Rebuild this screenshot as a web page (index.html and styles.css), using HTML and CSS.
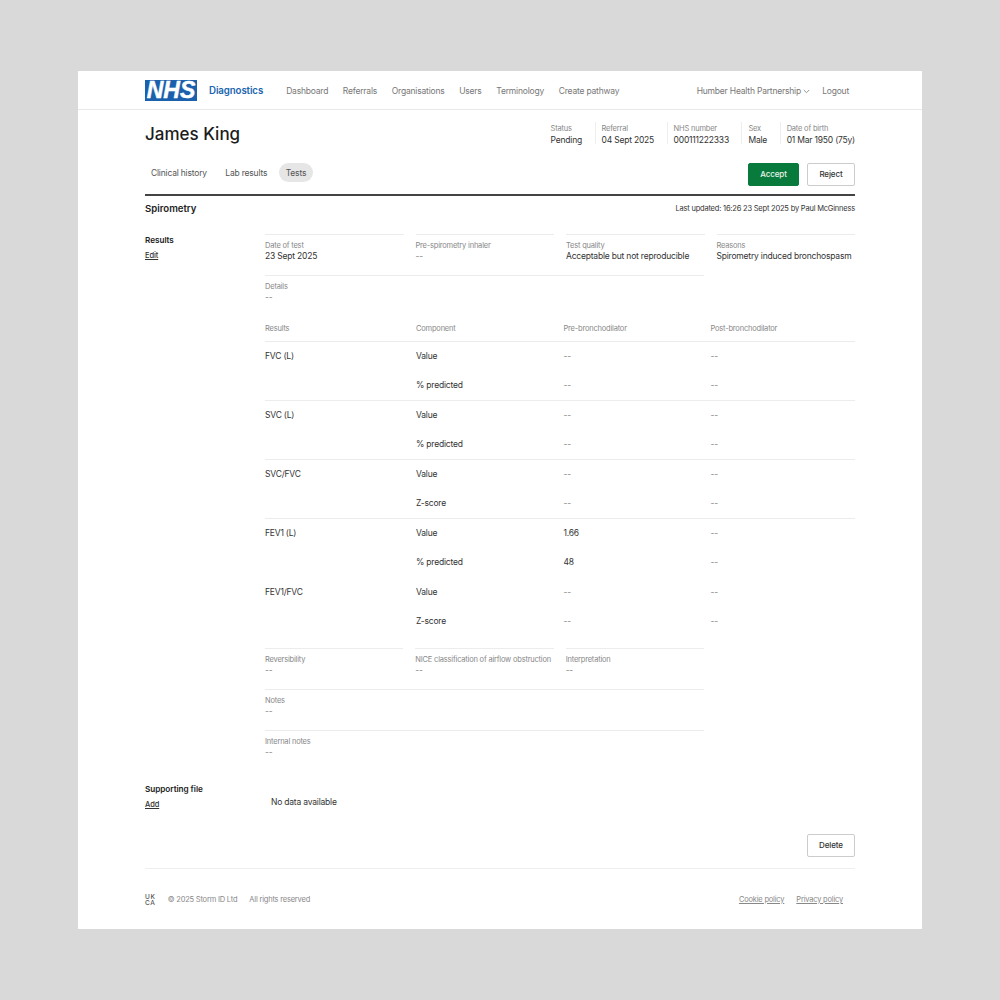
FILE: index.html
```html
<!DOCTYPE html>
<html lang="en">
<head>
<meta charset="utf-8">
<title>James King - Tests</title>
<link rel="stylesheet" href="styles.css">
</head>
<body>
<div class="panel">
  <header class="topbar">
    <div class="nhs">NHS</div>
    <div class="brand">Diagnostics</div>
    <nav class="nav">
      <a>Dashboard</a><a>Referrals</a><a>Organisations</a><a>Users</a><a>Terminology</a><a>Create pathway</a>
    </nav>
    <div class="account">
      <span class="org">Humber Health Partnership
        <svg class="chev" width="7" height="5" viewBox="0 0 7 5"><path d="M.8 1l2.7 2.7L6.2 1" fill="none" stroke="#777" stroke-width=".8"/></svg>
      </span>
      <a>Logout</a>
    </div>
  </header>
  <main class="content">
    <section class="patient">
      <h1>James King</h1>
      <dl class="facts">
        <div class="fact"><dt>Status</dt><dd>Pending</dd></div>
        <div class="fact"><dt>Referral</dt><dd>04 Sept 2025</dd></div>
        <div class="fact"><dt>NHS number</dt><dd>000111222333</dd></div>
        <div class="fact"><dt>Sex</dt><dd>Male</dd></div>
        <div class="fact"><dt>Date of birth</dt><dd>01 Mar 1950 (75y)</dd></div>
      </dl>
    </section>
    <section class="tabsrow">
      <div class="tabs">
        <a class="tab">Clinical history</a><a class="tab">Lab results</a><a class="tab active">Tests</a>
      </div>
      <div class="actions">
        <button class="btn primary">Accept</button>
        <button class="btn">Reject</button>
      </div>
    </section>
    <section class="titlebar">
      <h2>Spirometry</h2>
      <p class="updated">Last updated: 16:26 23 Sept 2025 by Paul McGinness</p>
    </section>
    <section class="results">
      <div class="side"><h3>Results</h3><a>Edit</a></div>
      <div class="body">
        <div class="fields four">
          <div class="field"><span>Date of test</span><b>23 Sept 2025</b></div>
          <div class="field"><span>Pre-spirometry inhaler</span><b class="nil">--</b></div>
          <div class="field"><span>Test quality</span><b>Acceptable but not reproducible</b></div>
          <div class="field"><span>Reasons</span><b>Spirometry induced bronchospasm</b></div>
        </div>
        <div class="field wide"><span>Details</span><b class="nil">--</b></div>
        <div class="table">
          <div class="thead"><span>Results</span><span>Component</span><span>Pre-bronchodilator</span><span>Post-bronchodilator</span></div>
          <div class="group">
            <div class="row"><span>FVC (L)</span><span>Value</span><span class="nil">--</span><span class="nil">--</span></div>
            <div class="row"><span></span><span>% predicted</span><span class="nil">--</span><span class="nil">--</span></div>
          </div>
          <div class="group">
            <div class="row"><span>SVC (L)</span><span>Value</span><span class="nil">--</span><span class="nil">--</span></div>
            <div class="row"><span></span><span>% predicted</span><span class="nil">--</span><span class="nil">--</span></div>
          </div>
          <div class="group">
            <div class="row"><span>SVC/FVC</span><span>Value</span><span class="nil">--</span><span class="nil">--</span></div>
            <div class="row"><span></span><span>Z-score</span><span class="nil">--</span><span class="nil">--</span></div>
          </div>
          <div class="group">
            <div class="row"><span>FEV1 (L)</span><span>Value</span><span>1.66</span><span class="nil">--</span></div>
            <div class="row"><span></span><span>% predicted</span><span>48</span><span class="nil">--</span></div>
          </div>
          <div class="group nolines">
            <div class="row"><span>FEV1/FVC</span><span>Value</span><span class="nil">--</span><span class="nil">--</span></div>
            <div class="row"><span></span><span>Z-score</span><span class="nil">--</span><span class="nil">--</span></div>
          </div>
        </div>
        <div class="lower">
          <div class="fields three">
            <div class="field"><span>Reversibility</span><b class="nil">--</b></div>
            <div class="field"><span>NICE classification of airflow obstruction</span><b class="nil">--</b></div>
            <div class="field"><span>Interpretation</span><b class="nil">--</b></div>
          </div>
          <div class="field wide"><span>Notes</span><b class="nil">--</b></div>
          <div class="field wide"><span>Internal notes</span><b class="nil">--</b></div>
        </div>
      </div>
    </section>
    <section class="files">
      <div class="side"><h3>Supporting file</h3><a>Add</a></div>
      <p class="empty">No data available</p>
    </section>
    <div class="deleterow"><button class="btn">Delete</button></div>
    <footer class="footer">
      <div class="ukca">UK<br>CA</div>
      <span class="copy">© 2025 Storm ID Ltd</span>
      <span class="rights">All rights reserved</span>
      <div class="legal"><a>Cookie policy</a><a>Privacy policy</a></div>
    </footer>
  </main>
</div>
</body>
</html>
```
FILE: styles.css
```css
* { box-sizing: border-box; }
html, body { margin: 0; }
body {
  height: 1000px;
  background: #d9d9d9;
  padding: 71px 78px;
  font-family: Inter, "Liberation Sans", sans-serif;
  font-size: 8.5px;
  letter-spacing: -.2px;
  line-height: 12px;
  color: #333;
}
.panel { background: #fff; height: 858px; }
.topbar {
  height: 39px;
  padding: 0 73px 0 67px;
  border-bottom: 1px solid #e9e9e9;
  display: flex;
  align-items: center;
}
.nhs {
  width: 52px; height: 21px;
  background: #1a60ac;
  color: #fff;
  font: italic bold 23px/21px "Liberation Sans", sans-serif;
  -webkit-text-stroke: .5px #fff;
  text-align: center;
  letter-spacing: 0;
}
.brand { margin-left: 12px; color: #1a64ae; font-weight: 600; font-size: 9.7px; letter-spacing: -.1px; padding-top: 1px; }
.nav { margin-left: 23px; display: flex; gap: 14.7px; color: #777; padding-top: 1px; }
.account { margin-left: auto; display: flex; gap: 12px; color: #777; padding-top: 1px; }
.chev { margin-left: 0; }
.content { padding: 0 67px; }
.patient { height: 52px; display: flex; justify-content: space-between; align-items: flex-start; }
h1 { margin: 14px 0 0; font-size: 17px; line-height: 20px; font-weight: 500; letter-spacing: 0; color: #1c1c1c; }
.facts { margin: 12px 0 0; display: flex; }
.fact { padding: 0 0 0 6px; margin-left: 12.5px; border-left: 1px solid #eee; height: 22px; }
.fact:first-child { border-left: 0; padding-left: 0; margin-left: 0; }
dt { font-size: 7.5px; line-height: 11px; padding-top: 1px; height: 11px; color: #888; }
dd { margin: 0; font-size: 8.5px; line-height: 12px; padding-top: 1px; color: #333; }
.tabsrow { display: flex; justify-content: space-between; align-items: flex-start; border-bottom: 2px solid #444; height: 34px; padding-top: 1px; }
.tabs { display: flex; color: #555; margin-left: -.5px; }
.tab { padding: 0 6.5px; height: 19px; line-height: 20px; border-radius: 10px; margin-right: 5.5px; }
.tab.active { background: #e6e6e6; }
.actions { display: flex; gap: 8px; }
.btn {
  width: 48px; height: 23px;
  border: 1px solid #ccc;
  border-radius: 2px;
  background: #fff;
  font: 500 8px/1 Inter, sans-serif;
  letter-spacing: -.1px;
  color: #333;
  padding: 0 0 2px;
}
.btn.primary { width: 51px; background: #087a3c; border-color: #087a3c; color: #e8f4ec; }
.titlebar { height: 38px; padding-top: 7px; display: flex; justify-content: space-between; align-items: flex-start; }
h2 { margin: 0; font-size: 9.6px; line-height: 12px; font-weight: 600; color: #222; letter-spacing: 0; }
.updated { margin: 0; font-size: 7.5px; line-height: 12px; color: #333; }
.results { display: flex; }
.side { width: 120px; flex: none; }
h3 { margin: 0; font-size: 8.2px; line-height: 12px; font-weight: 600; color: #222; letter-spacing: -.05px; }
.side a { display: block; margin-top: 4px; font-size: 7.5px; line-height: 12px; font-weight: 500; text-decoration: underline; color: #333; letter-spacing: -.1px; }
.body { width: 590px; }
.fields { display: grid; gap: 12px; }
.fields.four { grid-template-columns: repeat(4, 1fr); }
.fields.three { grid-template-columns: repeat(3, 1fr); width: 439px; }
.field { border-top: 1px solid #ececec; padding-top: 5px; height: 41px; }
.field.wide { width: 439px; }
.field span { display: block; font-size: 7.5px; line-height: 11px; margin-bottom: -1px; color: #888; white-space: nowrap; }
.field b { display: block; font-weight: 400; font-size: 8.5px; line-height: 12px; color: #333; white-space: nowrap; }
.field b.nil, .row .nil { color: #888; }
.table { margin-top: 6px; }
.thead, .row { display: grid; grid-template-columns: 151px 147.5px 147px 1fr; }
.thead { height: 19px; padding-top: 1px; color: #888; font-size: 7.5px; }
.group { border-top: 1px solid #ececec; height: 59px; }
.group.nolines { border-top: 0; padding-top: 1px; }
.row { height: 29px; padding-bottom: 1px; align-items: center; color: #333; }
.lower { margin-top: 12px; }
.files { display: flex; margin-top: 12px; height: 51px; }
.empty { margin: 13px 0 0 6px; font-size: 8.5px; color: #333; }
.deleterow { display: flex; justify-content: flex-end; height: 34px; }
.footer { border-top: 1px solid #eee; padding-top: 2px; display: flex; align-items: center; height: 61px; color: #888; font-size: 7.5px; }
.ukca { font-size: 6.5px; line-height: 6.5px; font-weight: 500; color: #555; margin-right: 12px; letter-spacing: .7px; }
.rights { margin-left: 12px; }
.legal { margin-left: auto; display: flex; gap: 12px; margin-right: 12px; text-decoration: underline; }
```
